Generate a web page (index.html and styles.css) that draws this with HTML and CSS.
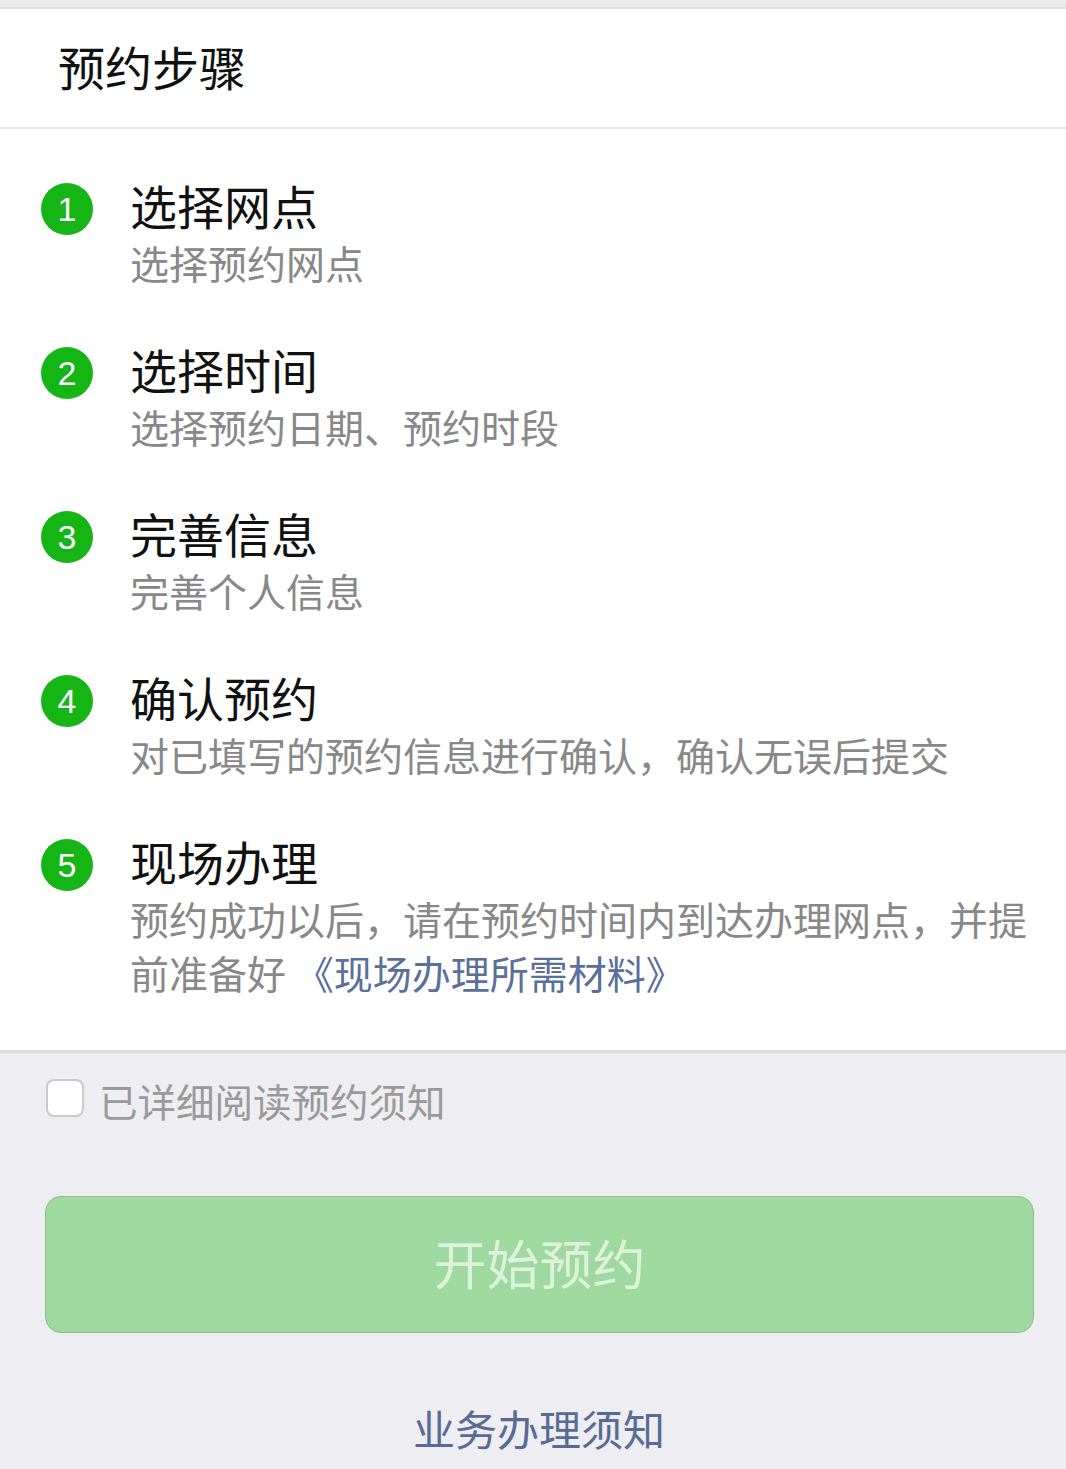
FILE: index.html
```html
<!DOCTYPE html>
<html lang="zh-CN">
<head>
<meta charset="utf-8">
<title>预约步骤</title>
<link rel="stylesheet" href="styles.css">
</head>
<body>
<div class="page">
  <div class="topbar"></div>
  <header class="header">预约步骤</header>
  <ol class="steps">
    <li class="step">
      <span class="num">1</span>
      <div class="body">
        <div class="title">选择网点</div>
        <div class="desc">选择预约网点</div>
      </div>
    </li>
    <li class="step">
      <span class="num">2</span>
      <div class="body">
        <div class="title">选择时间</div>
        <div class="desc">选择预约日期、预约时段</div>
      </div>
    </li>
    <li class="step">
      <span class="num">3</span>
      <div class="body">
        <div class="title">完善信息</div>
        <div class="desc">完善个人信息</div>
      </div>
    </li>
    <li class="step">
      <span class="num">4</span>
      <div class="body">
        <div class="title">确认预约</div>
        <div class="desc">对已填写的预约信息进行确认，确认无误后提交</div>
      </div>
    </li>
    <li class="step">
      <span class="num">5</span>
      <div class="body">
        <div class="title">现场办理</div>
        <div class="desc">预约成功以后，请在预约时间内到达办理网点，并提前准备好 <a class="link" href="#">《现场办理所需材料》</a></div>
      </div>
    </li>
  </ol>
  <div class="footer">
    <label class="agree">
      <span class="box"></span>
      <span class="agree-text">已详细阅读预约须知</span>
    </label>
    <button class="start" type="button">开始预约</button>
    <a class="notice" href="#">业务办理须知</a>
  </div>
</div>
</body>
</html>
```

FILE: styles.css
```css
html, body {
  margin: 0;
  padding: 0;
}
body {
  background: #eeedf1;
  font-family: "Noto Sans CJK SC", "Noto Sans", sans-serif;
  width: 1066px;
  height: 1469px;
  overflow: hidden;
}
.page {
  display: flex;
  flex-direction: column;
}
.topbar {
  height: 7px;
  background: #ebebee;
  border-bottom: 2px solid #dedede;
}
.header {
  height: 120px;
  box-sizing: border-box;
  padding: 0 0 5px 58px;
  background: #fff;
  border-bottom: 2px solid #e6e6e6;
  display: flex;
  align-items: center;
  font-size: 47px;
  line-height: 60px;
  color: #111;
}
.steps {
  list-style: none;
  margin: 0;
  padding: 46px 30px 51px 41px;
  background: #fff;
  border-bottom: 3px solid #d9d9db;
  display: flex;
  flex-direction: column;
  gap: 50px;
}
.step {
  display: flex;
  align-items: flex-start;
  gap: 37px;
}
.num {
  flex: none;
  width: 52px;
  height: 52px;
  margin-top: 8px;
  border-radius: 50%;
  background: #15b515;
  color: #fff;
  font-family: "Liberation Sans", Arial, sans-serif;
  font-size: 34px;
  line-height: 52px;
  text-align: center;
}
.body {
  flex: 1;
  min-width: 0;
}
.title {
  font-size: 47px;
  line-height: 60px;
  color: #111;
}
.desc {
  font-size: 39px;
  line-height: 54px;
  color: #888;
}
.link {
  color: #5a6f9a;
  text-decoration: none;
}
.footer {
  display: flex;
  flex-direction: column;
  align-items: flex-start;
}
.agree {
  display: flex;
  align-items: center;
  gap: 15px;
  margin: 20px 0 0 46px;
  height: 54px;
}
.box {
  width: 34px;
  height: 34px;
  border: 2px solid #cacaca;
  border-radius: 8px;
  background: #fff;
  margin-top: -5px;
}
.agree-text {
  font-size: 38.5px;
  line-height: 54px;
  color: #999;
}
.start {
  margin: 69px 0 0 45px;
  width: 989px;
  height: 137px;
  border: 1px solid #8dbf8c;
  border-radius: 16px;
  background: #a0d9a0;
  color: #dcf2da;
  font-family: "Noto Sans CJK SC", sans-serif;
  font-size: 53px;
  padding: 0 0 5px;
}
.notice {
  align-self: center;
  margin: 68px 0 0 12px;
  font-size: 42px;
  line-height: 54px;
  color: #576b95;
  text-decoration: none;
}
```
